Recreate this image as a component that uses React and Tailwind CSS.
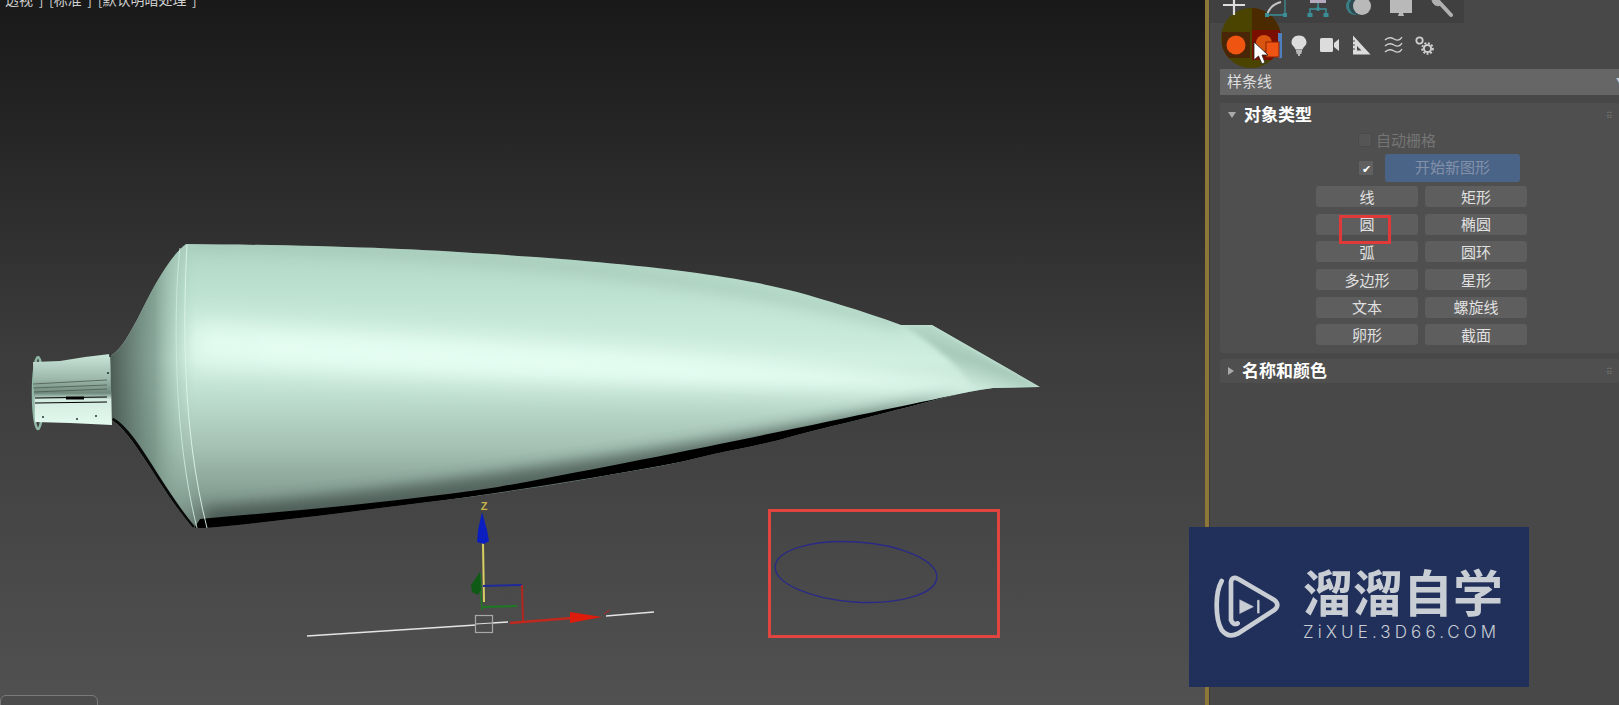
import React from 'react';

const CJK = "font-['Noto_Sans_CJK_SC','Liberation_Sans',sans-serif]";

const shapeButtons = [
  ['线', '矩形'],
  ['圆', '椭圆'],
  ['弧', '圆环'],
  ['多边形', '星形'],
  ['文本', '螺旋线'],
  ['卵形', '截面'],
];

const BODY =
  'M110 356 C122 350 130 332 138 318 C152 290 168 258 186 244 C300 245 400 248 473 253 C560 258 640 265 697 273 C740 279 770 285 797 292 C825 300 860 310 901 325 L932 325 L1040 387 L993 388 C960 392 930 402 896 410 C860 420 830 426 797 435 C760 446 730 450 697 458 C660 467 630 471 598 477 C560 484 530 488 498 493 C450 500 400 505 349 512 C300 518 250 524 205 528 L193 528 C160 490 135 435 112 420 Z';

// 3D viewport contents: tube, gizmo, grid line and the annotated circle
const Scene = () => (
  <svg viewBox="0 0 1205 705" className="w-full h-full block">
    <defs>
      <clipPath id="bodyClip"><path d={BODY} /></clipPath>
      <linearGradient id="tubeShade" gradientUnits="userSpaceOnUse" x1="0" y1="245" x2="0" y2="528">
        <stop offset="0" stopColor="#b0d5c4" />
        <stop offset="0.2" stopColor="#c0e4d3" />
        <stop offset="0.4" stopColor="#ceeedf" />
        <stop offset="0.55" stopColor="#bcdccd" />
        <stop offset="0.72" stopColor="#a3c0b2" />
        <stop offset="0.88" stopColor="#869f93" />
        <stop offset="1" stopColor="#65786f" />
      </linearGradient>
      <linearGradient id="tubeLeft" gradientUnits="userSpaceOnUse" x1="105" y1="0" x2="195" y2="0">
        <stop offset="0" stopColor="#3d4a45" stopOpacity="0.95" />
        <stop offset="0.55" stopColor="#6a877a" stopOpacity="0.7" />
        <stop offset="1" stopColor="#a9cdbd" stopOpacity="0" />
      </linearGradient>
      <linearGradient id="flapShade" gradientUnits="userSpaceOnUse" x1="962" y1="340" x2="945" y2="392">
        <stop offset="0" stopColor="#b4d6c6" />
        <stop offset="0.3" stopColor="#a6c9b9" />
        <stop offset="0.75" stopColor="#cdeadc" />
        <stop offset="1" stopColor="#def8ec" />
      </linearGradient>
      <linearGradient id="capShade" x1="0" y1="0" x2="0" y2="1">
        <stop offset="0" stopColor="#c9e6d8" />
        <stop offset="0.35" stopColor="#9db9ab" />
        <stop offset="0.55" stopColor="#6f8a7d" />
        <stop offset="0.64" stopColor="#d3ecdf" />
        <stop offset="1" stopColor="#e3faef" />
      </linearGradient>
      <filter id="blurWide" x="-20%" y="-50%" width="140%" height="200%"><feGaussianBlur stdDeviation="13" /></filter>
      <filter id="blurMid" x="-20%" y="-50%" width="140%" height="200%"><feGaussianBlur stdDeviation="7" /></filter>
      <filter id="blurFine" x="-20%" y="-50%" width="140%" height="200%"><feGaussianBlur stdDeviation="2.5" /></filter>
    </defs>

    {/* tube body */}
    <path d={BODY} fill="url(#tubeShade)" />
    <g clipPath="url(#bodyClip)">
      <path d="M190 322 C400 332 700 350 990 386 L990 390 C700 388 400 378 190 364 Z" fill="#e4fdf1" filter="url(#blurWide)" />
      <path d="M260 340 C450 345 700 362 990 386 L990 389 C700 380 450 368 260 356 Z" fill="#e4fdf1" filter="url(#blurMid)" />
      <path d="M205 535 C400 515 700 480 896 415 L960 395 C800 425 500 480 205 508 Z" fill="#3e4c46" opacity="0.7" filter="url(#blurMid)" />
      <path d="M186 244 C400 248 700 270 901 325" fill="none" stroke="#9cbfae" strokeWidth="10" opacity="0.6" filter="url(#blurMid)" />
      <path d="M902 325 L932 325 L1040 387 L975 390 C960 365 930 342 902 325 Z" fill="url(#flapShade)" filter="url(#blurFine)" />
      <rect x="100" y="230" width="100" height="310" fill="url(#tubeLeft)" />
      {/* black underside */}
      <path d="M193 530 L205 530 C400 508 700 470 896 412 L965 393 C900 406 700 450 498 487 C400 502 280 512 200 519 Z" fill="#000" />
      <path d="M112 420 C135 432 160 490 193 528" fill="none" stroke="#0a0a0a" strokeWidth="5" />
    </g>

    {/* seam lines */}
    <path d="M180 248 C174 300 172 430 197 528" fill="none" stroke="#cdebdd" strokeWidth="0.9" />
    <path d="M187 245 C183 320 182 430 207 528" fill="none" stroke="#dcf5ea" strokeWidth="0.9" />

    {/* cap */}
    <ellipse cx="38" cy="393" rx="5" ry="36" fill="none" stroke="#8fb8a6" strokeWidth="2.5" />
    <path d="M33 362 L60 361 L85 357 L110 354 L112 425 L70 423 L35 422 Z" fill="url(#capShade)" />
    <path d="M33 384 L107 380 M33 388 L107 385 M34 392 L107 389" stroke="#4b5a52" strokeWidth="0.8" />
    <path d="M35 403 L107 402" stroke="#000" strokeWidth="1.2" />
    <path d="M35 398 L107 397" stroke="#000" strokeWidth="1.2" />
    <path d="M66 398 L84 398" stroke="#000" strokeWidth="3" />
    <path d="M42 417 h2 M76 419 h2 M95 416 h2 M110 354 v3 M108 372 v2" stroke="#26332d" strokeWidth="1.6" />

    {/* grid line */}
    <path d="M307 636 L476 625 M492 623 L508 622 M606 616 L654 612" stroke="#e4e4e4" strokeWidth="1.5" fill="none" />
    <rect x="475.5" y="615.5" width="17" height="17" fill="none" stroke="#a8a8a8" strokeWidth="1.2" />
    <path d="M476 624 L492 623" stroke="#ddd" strokeWidth="1.2" />

    {/* gizmo */}
    <text x="484" y="510" textAnchor="middle" fontFamily="Liberation Sans" fontWeight="700" fontSize="11" fill="#c9b349">Z</text>
    <path d="M483 543 L484 602" stroke="#d8cf62" strokeWidth="2" />
    <path d="M482 512 L487 530 L489 541 L484 544 L477 542 L478 530 Z" fill="#0b1fc0" />
    <path d="M483 586 L522 585" stroke="#1f2a9a" strokeWidth="2" />
    <path d="M522 585 L523 622" stroke="#b3261e" strokeWidth="2" />
    <path d="M483 607 L517 606" stroke="#1d7a22" strokeWidth="2" />
    <path d="M480 573 L482 610" stroke="#1d7a22" strokeWidth="1.5" />
    <path d="M480 572 L481 590 L478 595 L472 592 L471 585 Z" fill="#0f5a14" />
    <path d="M510 623 L572 618" stroke="#c0281e" strokeWidth="2.5" />
    <path d="M570 612 L602 617 L570 623 Z" fill="#dd1c0c" />
    <path d="M604 614 L610 610" stroke="#b3261e" strokeWidth="1" />

    {/* annotated circle */}
    <ellipse cx="856" cy="572" rx="81" ry="30" transform="rotate(4 856 572)" fill="none" stroke="#2a2a86" strokeWidth="1.4" />
    <rect x="769.5" y="510.5" width="229" height="126" fill="none" stroke="#e2453f" strokeWidth="3" />
  </svg>
);

const TabIcons = () => (
  <div className="flex h-[23px] w-[254px] pl-[3px] bg-[#404040] overflow-hidden">
    <div className="relative z-20 w-[42px] flex justify-center">
      <svg width="22" height="23" viewBox="0 0 22 23" stroke="#dedede" strokeWidth="2.2">
        <path d="M0 5 H22 M11 0 V15" />
      </svg>
    </div>
    <div className="relative z-20 w-[42px] flex justify-center">
      <svg width="24" height="23" viewBox="0 0 24 23" fill="none">
        <path d="M3 16 Q5 5 17 2" stroke="#c4c4c4" strokeWidth="2" />
        <path d="M3 15 H21 V0" stroke="#3a8f96" strokeWidth="1.3" />
        <rect x="1" y="13" width="4" height="4" fill="#3a8f96" />
        <rect x="19" y="13" width="4" height="4" fill="#3a8f96" />
      </svg>
    </div>
    <div className="relative z-20 w-[42px] flex justify-center">
      <svg width="22" height="23" viewBox="0 0 22 23" fill="none">
        <rect x="3" y="0" width="16" height="3" fill="#b4a9bd" />
        <path d="M11 3 V9 M3 14 V9 H19 V14" stroke="#3a8f96" strokeWidth="1.5" />
        <circle cx="11" cy="9" r="2" fill="#3a8f96" />
        <rect x="0.5" y="13" width="5" height="4" fill="#3a8f96" />
        <rect x="16.5" y="13" width="5" height="4" fill="#3a8f96" />
      </svg>
    </div>
    <div className="relative z-20 w-[42px] flex justify-center">
      <svg width="26" height="23" viewBox="0 0 26 23">
        <circle cx="9" cy="6" r="9" fill="#3a7f86" />
        <circle cx="12" cy="6" r="9" fill="#2d4b50" />
        <circle cx="16" cy="6" r="9" fill="#b9b9b9" />
      </svg>
    </div>
    <div className="relative z-20 w-[42px] flex justify-center">
      <svg width="22" height="23" viewBox="0 0 22 23">
        <rect x="0" y="0" width="22" height="13" fill="#b9b9b9" />
        <path d="M9 13 H13 L14 16 H7 L8 16 Z" fill="#b9b9b9" />
      </svg>
    </div>
    <div className="relative z-20 w-[42px] flex justify-center">
      <svg width="24" height="23" viewBox="0 0 24 23" fill="none" stroke="#b0b0b0">
        <path d="M7 1 L20 15" strokeWidth="4" strokeLinecap="round" />
        <path d="M1 0 C2 5 6 7 10 5 L7 0" fill="#b0b0b0" strokeWidth="1" />
      </svg>
    </div>
  </div>
);

const CategoryIcons = () => (
  <div className="flex items-center h-[46px] pl-[10px] pb-[2px]">
    <div className="relative z-20 w-[31.5px] flex justify-center">
      <svg width="20" height="20" viewBox="0 0 20 20"><circle cx="10" cy="10" r="9.5" fill="#ef5410" /></svg>
    </div>
    <div className="relative z-20 w-[31.5px] flex justify-center">
      <svg width="31" height="30" viewBox="0 0 31 30">
        <rect x="26" y="3" width="4" height="25" fill="#4f7fbe" />
        <circle cx="12" cy="13" r="8" fill="#d9550f" />
        <rect x="14" y="12" width="13" height="15" fill="#ee5414" stroke="#8c2200" strokeWidth="1" />
      </svg>
    </div>
    <div className="relative z-20 w-[31.5px] flex justify-center">
      <svg width="16" height="21" viewBox="0 0 16 21">
        <path d="M8 0.5 C3 0.5 0.5 4 0.5 7.5 C0.5 10.5 3.5 11.5 4.5 14.5 H11.5 C12.5 11.5 15.5 10.5 15.5 7.5 C15.5 4 13 0.5 8 0.5 Z" fill="#dcdcdc" />
        <path d="M5 16 H11 M5.5 18 H10.5 M7 20 H9" stroke="#dcdcdc" strokeWidth="1.3" />
      </svg>
    </div>
    <div className="relative z-20 w-[31.5px] flex justify-center">
      <svg width="20" height="14" viewBox="0 0 20 14">
        <rect x="0" y="0" width="13" height="14" rx="1.5" fill="#dcdcdc" />
        <path d="M14 5 L19 1 V13 L14 9 Z" fill="#dcdcdc" />
      </svg>
    </div>
    <div className="relative z-20 w-[31.5px] flex justify-center">
      <svg width="19" height="20" viewBox="0 0 19 20">
        <path d="M1 0.5 L18.5 19.5 H1 Z M5 11 V15.5 H9.5 Z" fill="#dcdcdc" fillRule="evenodd" />
        <path d="M1 6 H3 M1 10 H3 M1 14 H3" stroke="#484848" strokeWidth="1" />
      </svg>
    </div>
    <div className="relative z-20 w-[31.5px] flex justify-center">
      <svg width="19" height="18" viewBox="0 0 19 18" fill="none" stroke="#cfcfcf" strokeWidth="1.4">
        <path d="M1 4 Q5 0 10 3 T18 1" />
        <path d="M1 10 Q5 6 10 9 T18 7" />
        <path d="M1 16 Q5 12 10 15 T18 13" />
      </svg>
    </div>
    <div className="relative z-20 w-[31.5px] flex justify-center">
      <svg width="19" height="19" viewBox="0 0 19 19" fill="none" stroke="#cfcfcf">
        <circle cx="4.5" cy="4.5" r="3.2" strokeWidth="1.8" />
        <circle cx="12.5" cy="12.5" r="3.6" strokeWidth="2" />
        <circle cx="12.5" cy="12.5" r="5.4" strokeWidth="1.8" strokeDasharray="2 1.6" />
      </svg>
    </div>
  </div>
);

// Mouse-click highlight sitting under the category icons
const CursorHighlight = () => (
  <div className="absolute z-10 left-[11px] top-[8px] w-[60px] h-[60px] rounded-full overflow-hidden bg-[#4a4400]">
    <div className="absolute left-[31px] top-0 w-[30px] h-[22px] bg-[#4c2a00]" />
    <div className="absolute left-[1px] top-[24px] w-[28px] h-[26px] bg-[#4a2608]" />
    <div className="absolute left-[31px] top-[22px] w-[30px] h-[30px] bg-[#7a0f00]" />
  </div>
);

const Rollout = ({ open, title, children }) => (
  <div className="bg-[#4f4f4f] rounded-[2px]">
    <div className="h-[24px] flex items-center">
      <span className={`ml-[8px] w-0 h-0 ${open ? 'border-x-[4px] border-x-transparent border-t-[6px] border-t-[#aaa]' : 'border-y-[4px] border-y-transparent border-l-[6px] border-l-[#aaa]'}`} />
      <span className="ml-[8px] -mt-[3px] text-[17px] font-bold text-white leading-none">{title}</span>
      <span className="ml-auto mr-[6px] text-[#777] text-[9px] leading-none">⠿</span>
    </div>
    {children}
  </div>
);

const App = () => {
  return (
    <div className={`relative flex w-[1619px] h-[705px] overflow-hidden ${CJK}`}>
      {/* Viewport */}
      <div className="relative w-[1205px] h-full bg-gradient-to-b from-[#191919] via-[#3c3c3c] via-50% to-[#515151]">
        <div className="absolute left-[5px] -top-[10px] text-[14px] leading-[18px] [word-spacing:2.5px] text-[#cfcfcf] whitespace-pre">透视 ] [标准 ] [默认明暗处理 ]</div>
        <Scene />
        <div className="absolute left-0 top-[695px] w-[98px] h-[20px] border border-[#7a7a7a] rounded-[6px] bg-[#4c4c4c]" />
      </div>

      {/* Gold splitter */}
      <div className="w-[4px] bg-[#8d7638]" />
      <div className="w-[1px] bg-[#3a3a3a]" />

      {/* Command panel */}
      <div className="relative flex-1 bg-[#484848] text-[#dedede]">
        <CursorHighlight />
        <TabIcons />
        <CategoryIcons />
        <div className="ml-[10px] h-[26px] bg-[#666666] flex items-center pl-[7px] pb-[3px] text-[15px] leading-none">
          样条线
          <span className="ml-auto -mr-[4px] text-[7px] text-[#ccc]">▼</span>
        </div>
        <div className="ml-[10px] mt-[8px] flex flex-col gap-[6px]">
          <Rollout open title="对象类型">
            <div className="h-[226px]">
              <div className="h-[22px] ml-[138px] flex items-center gap-[4px] pt-[3px]">
                <span className="w-[14px] h-[14px] bg-[#555] border border-[#4a4a4a]" />
                <span className="text-[15px] leading-none text-[#757575]">自动栅格</span>
              </div>
              <div className="ml-[139px] mt-[5px] flex items-center gap-[12px]">
                <span className="w-[14px] h-[14px] bg-[#606060] text-white text-[11px] leading-[14px] text-center">✔</span>
                <span className="w-[135px] h-[28px] rounded-[3px] bg-[#4a6488] text-[#8391a8] text-[15px] leading-[26px] text-center">开始新图形</span>
              </div>
              <div className="ml-[96px] mt-[4px] grid grid-cols-[102px_102px] gap-x-[7px] gap-y-[6.7px]">
                {shapeButtons.flat().map((label) => (
                  <button key={label} className="h-[21px] rounded-[3px] bg-[#5e5e5e] text-[15px] leading-[20px] text-[#e0e0e0] text-center">{label}</button>
                ))}
              </div>
            </div>
          </Rollout>
          <Rollout title="名称和颜色" />
        </div>
      </div>

      {/* overlays */}
      <svg className="absolute z-30 left-[1253px] top-[41px]" width="16" height="24" viewBox="0 0 16 24">
        <path d="M1 1 V19 L5.5 15 L9 23 L12 21.5 L9 14 L15 14 Z" fill="#fff" stroke="#222" strokeWidth="0.8" />
      </svg>
      <div className="absolute left-[1339px] top-[215px] w-[52px] h-[29px] border-[3px] border-[#e0393a]" />

      {/* Watermark */}
      <div className="absolute z-30 left-[1189px] top-[527px] w-[340px] h-[160px] bg-[#20305a] flex items-center pl-[16px] text-[#c9cdd4]">
        <svg width="90" height="80" viewBox="0 0 270 240" fill="none" stroke="#c9cdd4" strokeWidth="14" strokeLinecap="round" strokeLinejoin="round" className="-mt-[4px]">
          <path d="M98 175 Q85 182 78 165 V52 Q80 32 100 42 L208 105 Q226 120 208 135 L98 206 Q70 220 50 195 Q35 170 35 120 Q35 75 50 48" />
          <path d="M105 105 L145 125 L105 145 Z" fill="#c9cdd4" strokeWidth="2" />
          <path d="M160 108 V142" strokeWidth="7" />
        </svg>
        <div className="ml-[8px] -mt-[12px]">
          <div className="text-[50px] leading-[58px] font-bold whitespace-nowrap">溜溜自学</div>
          <div className="mt-[3px] font-['Inter',sans-serif] font-light text-[17px] leading-[20px] tracking-[4.1px] whitespace-nowrap">ZiXUE.3D66.COM</div>
        </div>
      </div>
    </div>
  );
};

export default App;
